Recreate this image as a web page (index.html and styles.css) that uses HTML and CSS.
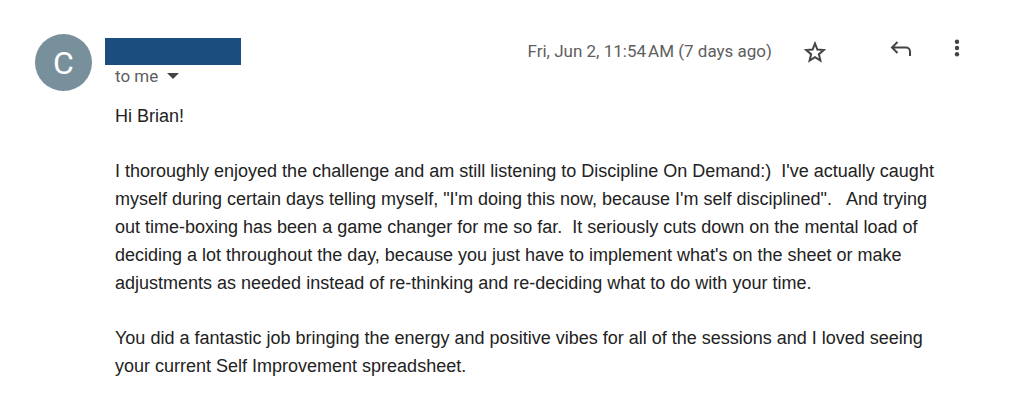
FILE: index.html
```html
<!DOCTYPE html>
<html lang="en">
<head>
  <meta charset="UTF-8">
  <meta name="viewport" content="width=device-width, initial-scale=1">
  <title>Message</title>
  <link rel="stylesheet" href="styles.css">
</head>
<body>
  <article class="message">
    <div class="avatar">C</div>

    <div class="content">
      <header class="message-header">
        <div class="sender">
          <div class="sender-name"></div>
          <button class="recipients" type="button">
            to me
            <svg width="12" height="6" viewBox="0 0 12 6" aria-hidden="true"><path d="M0 0h12L6 6z"/></svg>
          </button>
        </div>

        <time class="date" datetime="11:54">Fri, Jun 2, 11:54&#8239;AM (7 days ago)</time>

        <div class="actions">
          <button class="icon-button" type="button" aria-label="Star">
            <svg width="24" height="24" viewBox="0 0 24 24"><path d="M12 4.500l2.400 6 6.400.500-4.900 4.200 1.500 6.300-5.400-3.400-5.400 3.400 1.500-6.300-4.900-4.200 6.400-.500z"/></svg>
          </button>
          <button class="icon-button reply" type="button" aria-label="Reply">
            <svg width="24" height="24" viewBox="0 0 24 24"><path d="M8.500 3L3 8.500 8.500 14M3 8.500h14a4 4 0 0 1 4 4V17"/></svg>
          </button>
          <button class="icon-button more" type="button" aria-label="More">
            <svg width="24" height="24" viewBox="0 0 24 24"><circle cx="12" cy="2.700" r="2.200"/><circle cx="12" cy="9" r="2.200"/><circle cx="12" cy="15.300" r="2.200"/></svg>
          </button>
        </div>
      </header>

      <div class="message-body">
        <p>Hi Brian!</p>
        <p>I thoroughly enjoyed the challenge and am still listening to Discipline On Demand:)&nbsp; I've actually caught myself during certain days telling myself, "I'm doing this now, because I'm self disciplined".&nbsp;&nbsp; And trying out time-boxing has been a game changer for me so far.&nbsp; It seriously cuts down on the mental load of deciding a lot throughout the day, because you just have to implement what's on the sheet or make adjustments as needed instead of re-thinking and re-deciding what to do with your time.</p>
        <p>You did a fantastic job bringing the energy and positive vibes for all of the sessions and I loved seeing your current Self Improvement spreadsheet.</p>
      </div>
    </div>
  </article>
</body>
</html>
```
FILE: styles.css
```css
body {
  margin: 0;
  background: #fff;
  color: #222;
  font-family: "Liberation Sans", Arial, sans-serif;
}

.message {
  display: flex;
  gap: 13px;
  padding: 34px 58px 32px 35px;
}

.avatar {
  flex: none;
  width: 57px;
  height: 57px;
  border-radius: 50%;
  background: #78909c;
  color: #fff;
  font-family: Roboto, sans-serif;
  font-size: 32px;
  line-height: 59px;
  text-align: center;
}

.content {
  flex: 1;
  min-width: 0;
}

.message-header {
  display: flex;
  align-items: flex-start;
  font-family: Roboto, sans-serif;
  color: #5e5e5e;
}

.sender {
  flex: 1;
  padding-top: 4px;
}

.sender-name {
  width: 136px;
  height: 27px;
  background: #1b4d7e;
}

.recipients {
  display: flex;
  align-items: center;
  gap: 9px;
  padding: 0 10px;
  border: 0;
  background: none;
  color: inherit;
  font: 17px/22px Roboto, sans-serif;
}

.recipients svg {
  fill: #444;
}

.date {
  font-size: 17px;
  line-height: 34px;
  white-space: nowrap;
}

.actions {
  display: flex;
  padding-left: 31px;
}

.icon-button {
  width: 24px;
  height: 34px;
  padding: 0;
  border: 0;
  background: none;
}

.icon-button svg {
  display: block;
  fill: none;
  stroke: #444;
  stroke-width: 2;
}

.reply {
  margin-left: 62px;
}

.more {
  margin-left: 32px;
}

.more svg {
  fill: #444;
  stroke: none;
}

.message-body {
  padding: 15px 20px 0 10px;
  font-size: 18px;
  line-height: 28px;
}

.message-body p {
  margin: 0 0 27px;
}

.message-body p:last-child {
  margin-bottom: 0;
}
```
